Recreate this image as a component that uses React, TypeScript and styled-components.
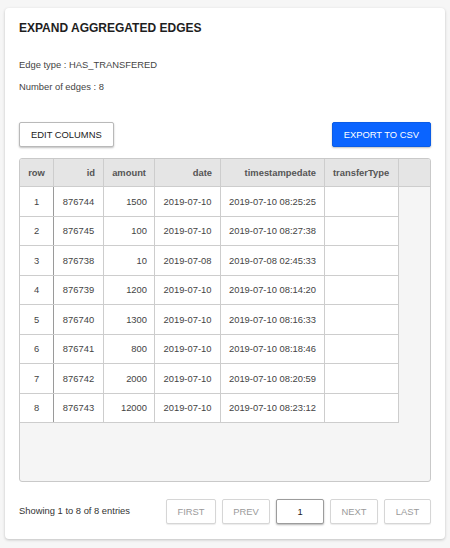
import React from "react";
import styled, { createGlobalStyle } from "styled-components";

const GlobalStyle = createGlobalStyle`
    html, body {
        margin: 0;
        padding: 0;
        background: #f6f6f6;
        font-family: "Liberation Sans", Arial, Helvetica, sans-serif;
    }
    * {
        box-sizing: border-box;
    }
`;

const Page = styled.div`
    padding: 8px 5px 9px 5px;
`;

const Card = styled.div`
    background: #fff;
    border-radius: 4px;
    box-shadow: 0 1px 3px rgba(0, 0, 0, 0.22);
    padding: 12px 14px 15px 14px;
    display: flex;
    flex-direction: column;
`;

const Title = styled.h1`
    margin: 0;
    font-size: 12px;
    line-height: 16px;
    font-weight: bold;
    color: #1e1e1e;
`;

const Info = styled.div<{ gap: number }>`
    margin-top: ${({ gap }) => gap}px;
    font-size: 9.4px;
    line-height: 14px;
    color: #444;
`;

const Toolbar = styled.div`
    margin-top: 28px;
    display: flex;
    justify-content: space-between;
`;

const Button = styled.button<{ primary?: boolean }>`
    height: 25px;
    padding: 0 11px;
    font-family: inherit;
    font-size: 9.4px;
    white-space: nowrap;
    border-radius: 2px;
    cursor: pointer;
    border: 1px solid ${({ primary }) => (primary ? "#0a5ce6" : "#b9b9b9")};
    background: ${({ primary }) => (primary ? "#0a64ff" : "#fff")};
    color: ${({ primary }) => (primary ? "#fff" : "#222")};
    box-shadow: 0 1px 2px rgba(0, 0, 0, 0.25);
`;

const TableBox = styled.div`
    margin-top: 11px;
    height: 324px;
    border: 1px solid #c9c9c9;
    border-radius: 3px;
    background: #f5f5f5;
    overflow: hidden;
`;

const columns = "34px 50px 51px 66px 104px 74px";

const HeadRow = styled.div`
    display: grid;
    grid-template-columns: ${columns} 1fr;
    height: 28px;
    background: #e5e5e5;
    border-bottom: 1px solid #cdcdcd;
`;

const HeadCell = styled.div<{ align: string }>`
    display: flex;
    align-items: center;
    justify-content: ${({ align }) => align};
    padding: 0 8px;
    white-space: nowrap;
    border-right: 1px solid #cdcdcd;
    font-size: 9.4px;
    font-weight: bold;
    color: #555;
    &:last-child {
        border-right: none;
    }
`;

const BodyRow = styled.div`
    display: grid;
    grid-template-columns: ${columns};
    width: 379px;
    height: 29.5px;
    background: #fff;
    border-bottom: 1px solid #cdcdcd;
`;

const Cell = styled.div<{ align: string; strong?: boolean }>`
    display: flex;
    align-items: center;
    justify-content: ${({ align }) => align};
    padding: 0 7px;
    white-space: nowrap;
    border-right: 1px solid ${({ strong }) => (strong ? "#9a9a9a" : "#cdcdcd")};
    font-size: 9.4px;
    color: #444;
`;

const Footer = styled.div`
    margin-top: 17px;
    display: flex;
    align-items: center;
`;

const Entries = styled.div`
    flex: 1;
    font-size: 9.4px;
    color: #333;
    padding-bottom: 2px;
`;

const Pager = styled.div`
    display: flex;
    gap: 6px;
`;

const PageButton = styled.button<{ active?: boolean; w: number }>`
    width: ${({ w }) => w}px;
    height: 25px;
    font-family: inherit;
    font-size: 9.4px;
    background: #fff;
    border-radius: 2px;
    border: 1px solid ${({ active }) => (active ? "#9c9c9c" : "#d6d6d6")};
    color: ${({ active }) => (active ? "#222" : "#9a9a9a")};
    box-shadow: ${({ active }) => (active ? "0 1px 2px rgba(0,0,0,0.3)" : "0 1px 1px rgba(0,0,0,0.08)")};
`;

const headers: [string, string][] = [
    ["row", "center"],
    ["id", "flex-end"],
    ["amount", "flex-end"],
    ["date", "flex-end"],
    ["timestampedate", "flex-end"],
    ["transferType", "flex-start"],
    ["", "flex-start"],
];

const rows = [
    ["1", "876744", "1500", "2019-07-10", "2019-07-10 08:25:25"],
    ["2", "876745", "100", "2019-07-10", "2019-07-10 08:27:38"],
    ["3", "876738", "10", "2019-07-08", "2019-07-08 02:45:33"],
    ["4", "876739", "1200", "2019-07-10", "2019-07-10 08:14:20"],
    ["5", "876740", "1300", "2019-07-10", "2019-07-10 08:16:33"],
    ["6", "876741", "800", "2019-07-10", "2019-07-10 08:18:46"],
    ["7", "876742", "2000", "2019-07-10", "2019-07-10 08:20:59"],
    ["8", "876743", "12000", "2019-07-10", "2019-07-10 08:23:12"],
];

const cellAlign = ["center", "center", "flex-end", "center", "center"];

const App: React.FC = () => {
    return (
        <>
            <GlobalStyle />
            <Page>
                <Card>
                    <Title>EXPAND AGGREGATED EDGES</Title>
                    <Info gap={22}>Edge type : HAS_TRANSFERED</Info>
                    <Info gap={8}>Number of edges : 8</Info>

                    <Toolbar>
                        <Button>EDIT COLUMNS</Button>
                        <Button primary>EXPORT TO CSV</Button>
                    </Toolbar>

                    <TableBox>
                        <HeadRow>
                            {headers.map(([label, align], i) => (
                                <HeadCell key={i} align={align}>
                                    {label}
                                </HeadCell>
                            ))}
                        </HeadRow>
                        {rows.map((row) => (
                            <BodyRow key={row[0]}>
                                {row.map((value, i) => (
                                    <Cell key={i} align={cellAlign[i]} strong={i === 0}>
                                        {value}
                                    </Cell>
                                ))}
                                <Cell align="flex-start" />
                            </BodyRow>
                        ))}
                    </TableBox>

                    <Footer>
                        <Entries>Showing 1 to 8 of 8 entries</Entries>
                        <Pager>
                            <PageButton w={50}>FIRST</PageButton>
                            <PageButton w={48}>PREV</PageButton>
                            <PageButton w={48} active>
                                1
                            </PageButton>
                            <PageButton w={48}>NEXT</PageButton>
                            <PageButton w={47}>LAST</PageButton>
                        </Pager>
                    </Footer>
                </Card>
            </Page>
        </>
    );
};

export default App;
